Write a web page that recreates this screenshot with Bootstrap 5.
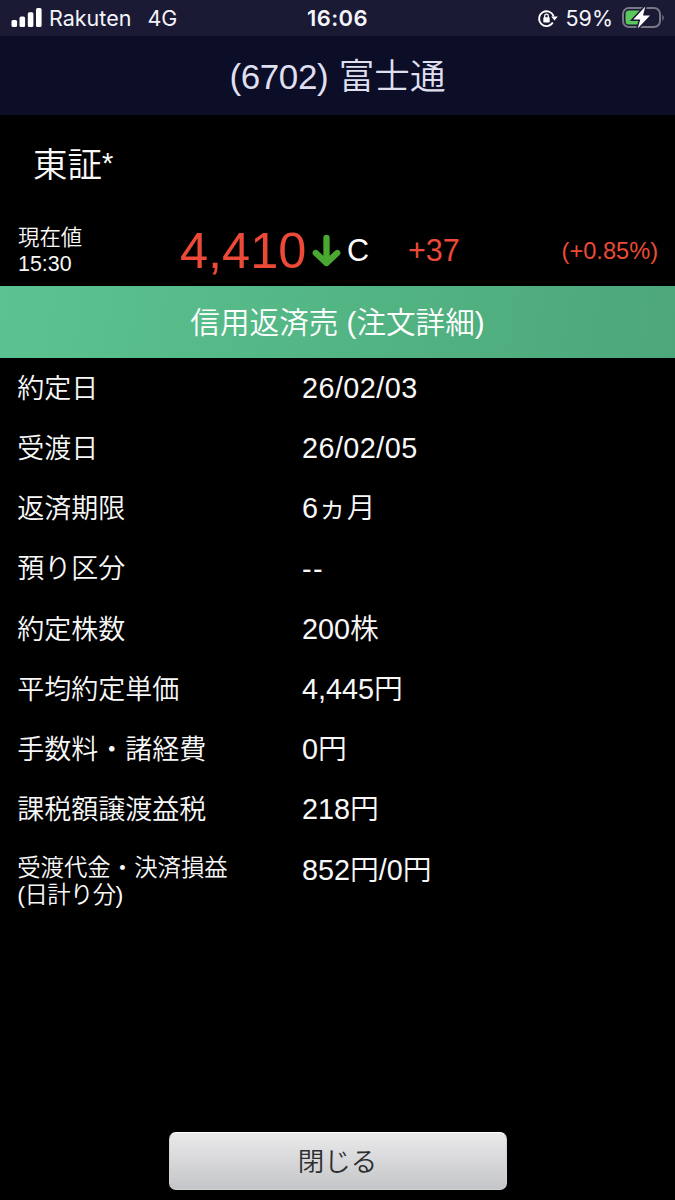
<!DOCTYPE html>
<html lang="ja">
<head>
<meta charset="utf-8">
<meta name="viewport" content="width=device-width, initial-scale=1">
<title>(6702) 富士通</title>
<link href="https://cdn.jsdelivr.net/npm/bootstrap@5.3.0/dist/css/bootstrap.min.css" rel="stylesheet">
<style>
body{background:#000;color:#f8f8f8;font-family:"Liberation Sans","Noto Sans CJK JP",sans-serif;font-weight:350;height:1200px;overflow:hidden}
.statusbar{height:36px;background:#1a1a35;color:#f4f4fa;font:400 21.5px/36px Inter,sans-serif;display:grid;grid-template-columns:1fr auto 1fr}
.clock{font-weight:600;font-size:22px;letter-spacing:.4px}
.titlebar{height:79px;background:#0c0d27;color:#dfdff0;font-size:35.6px;padding-top:4px}
.code{font-size:35px;letter-spacing:-.4px;margin-right:10.5px}
.market{height:100px;padding:2px 33px 0;font-size:34.5px}
.star{font-size:29px;margin:-5px 0 0 0}
.quote{height:71px;padding-left:18px;padding-right:17px}
.quote-name{width:162px;font-size:21.4px;line-height:26px}
.red{color:#ec4a36}
.price{font-size:50.5px;line-height:70px;width:127px}
.close-flag{font-size:30.5px;width:61px;margin-left:3px;color:#fff}
.diff{font-size:30.5px}
.pct{font-size:23.6px;padding-top:2px}
.section-title{height:72px;background:linear-gradient(100deg,#5bc391 0%,#53b584 50%,#4da77a 100%);color:#fff;font-size:29.6px;font-weight:350;padding-top:2px}
.detail-list{padding:1px 0 0 17.2px}
.detail{height:60.2px}
.detail dt{width:284.8px;font-size:27px;font-weight:350}
.detail dd{font-size:28.8px;line-height:38px;padding-bottom:2px}
.detail .date{letter-spacing:.45px}
.detail .dashes{letter-spacing:1.5px}
.detail.last-row{padding-top:10px}
.detail .two-line{font-size:23.4px;line-height:27px;padding-top:4px}
.narrow{letter-spacing:-.6px}
.close-btn{width:338px;height:58px;font-size:26.5px;font-weight:350;color:#2d2e30;border:1px solid #d2d3d5;border-top-color:#fff;border-radius:7px;background:linear-gradient(#eaeaeb,#c4c5c8);margin-bottom:10.5px;padding:4px 0 0}
</style>
<script src="https://cdn.jsdelivr.net/npm/bootstrap@5.3.0/dist/js/bootstrap.bundle.min.js"></script>
</head>
<body class="d-flex flex-column">
<header>
  <div class="statusbar">
    <div class="d-flex align-items-center">
      <svg width="49" height="36" fill="#fff"><rect x="11.5" y="20" width="5.6" height="7" rx="1.6"/><rect x="19.5" y="16.5" width="5.6" height="10.5" rx="1.6"/><rect x="27.8" y="12.2" width="5.6" height="14.8" rx="1.6"/><rect x="36" y="8" width="5.6" height="19" rx="1.6"/></svg>
      <span>Rakuten</span><span class="ms-3">4G</span>
    </div>
    <div class="clock">16:06</div>
    <div class="d-flex align-items-center justify-content-end">
      <svg width="29" height="36" fill="none" stroke="#fff" stroke-width="1.8"><path d="M16.8 22.6A7.4 7.4 0 1 1 17.6 16.5"/><path d="M15.2 16.4h6.6l-3.3 4.2z" fill="#fff" stroke="none"/><rect x="7.3" y="17.3" width="6.4" height="5.2" rx=".8" fill="#fff" stroke="none"/><path d="M8.7 18v-2a1.8 1.8 0 0 1 3.6 0v2" stroke-width="1.3"/></svg>
      <span>59%</span>
      <svg class="ms-2" width="54" height="36"><rect x="2" y="8" width="37" height="19" rx="6" fill="none" stroke="#777788" stroke-width="2"/><path d="M8 10.5h13v14H8a3.5 3.5 0 0 1-3.5-3.5v-7A3.5 3.5 0 0 1 8 10.5z" fill="#5ac85c"/><path d="M41.3 14.4q3 3.3 0 6.6z" fill="#777788"/><path d="M24.3 6.5 12.3 19.6h7L16.7 28.5 29 15.4h-7z" fill="#fff" stroke="#1a1a35" stroke-width="3" paint-order="stroke"/></svg>
    </div>
  </div>
  <div class="titlebar d-flex align-items-center justify-content-center"><span class="code">(6702)</span><span>富士通</span></div>
</header>
<main class="flex-grow-1">
  <div class="market d-flex align-items-center"><span>東証</span><span class="star">*</span></div>
  <div class="quote d-flex align-items-center">
    <div class="quote-name">現在値<br>15:30</div>
    <div class="price red">4,410</div>
    <svg width="37" height="40" viewBox="307 230.5 37 40" fill="none" stroke="#4aa832" stroke-width="6.3" stroke-linecap="round" stroke-linejoin="round"><path d="M326.5 237.5v25M315.8 252.5l10.7 10 10.7-10"/></svg>
    <div class="close-flag">C</div>
    <div class="diff red">+37</div>
    <div class="pct red ms-auto">(+0.85%)</div>
  </div>
  <h1 class="section-title d-flex align-items-center justify-content-center m-0">信用返済売 (注文詳細)</h1>
  <dl class="detail-list m-0">
    <div class="detail d-flex align-items-center"><dt>約定日</dt><dd class="date m-0">26/02/03</dd></div>
    <div class="detail d-flex align-items-center"><dt>受渡日</dt><dd class="date m-0">26/02/05</dd></div>
    <div class="detail d-flex align-items-center"><dt>返済期限</dt><dd class="m-0">6ヵ月</dd></div>
    <div class="detail d-flex align-items-center"><dt>預り区分</dt><dd class="dashes m-0">--</dd></div>
    <div class="detail d-flex align-items-center"><dt>約定株数</dt><dd class="m-0">200株</dd></div>
    <div class="detail d-flex align-items-center"><dt>平均約定単価</dt><dd class="m-0">4,445円</dd></div>
    <div class="detail d-flex align-items-center"><dt>手数料・諸経費</dt><dd class="m-0">0円</dd></div>
    <div class="detail d-flex align-items-center"><dt>課税額譲渡益税</dt><dd class="m-0">218円</dd></div>
    <div class="detail last-row d-flex align-items-start"><dt class="two-line">受渡代金・決済損益<br><span class="narrow">(日計り分)</span></dt><dd class="m-0">852円/0円</dd></div>
  </dl>
</main>
<footer class="d-flex justify-content-center"><button type="button" class="close-btn">閉じる</button></footer>
</body>
</html>
